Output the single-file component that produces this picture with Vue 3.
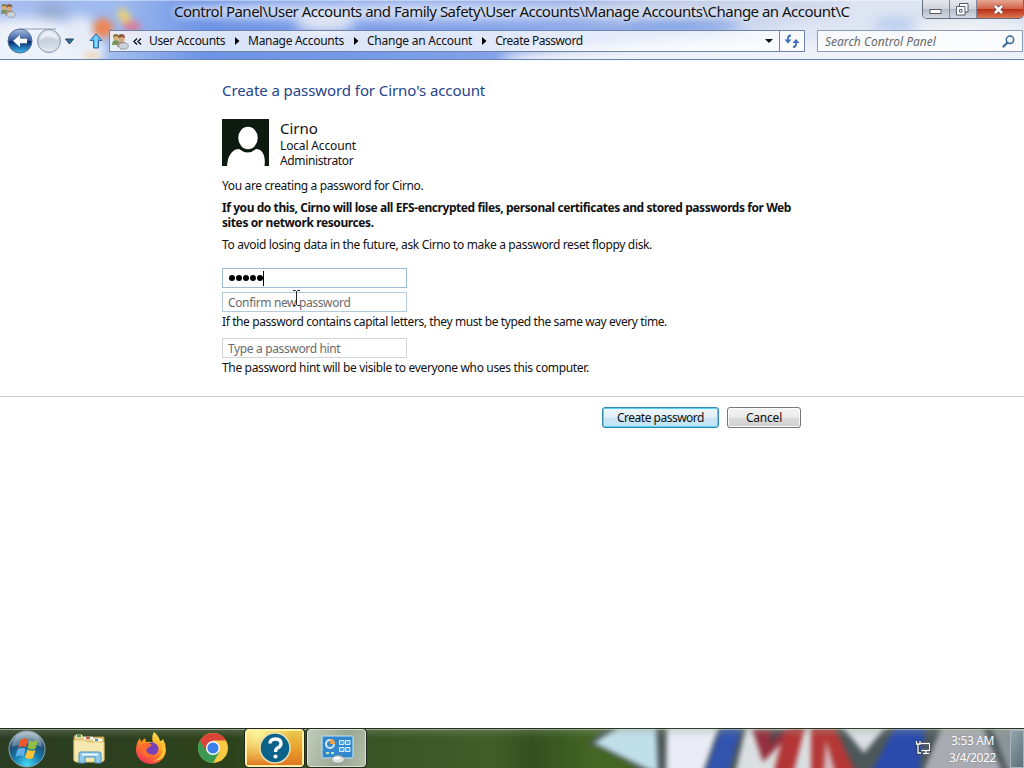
<script setup>
import { ref, reactive } from 'vue'

const title = 'Control Panel\\User Accounts and Family Safety\\User Accounts\\Manage Accounts\\Change an Account\\C'

const crumbs = [
    { label: 'User Accounts', name: 'users' },
    { label: 'Manage Accounts', name: 'manage' },
    { label: 'Change an Account', name: 'change' },
    { label: 'Create Password', name: 'create' },
]

const search = ref('')

const form = reactive({
    password: '12345',
    confirm: '',
    hint: '',
})
</script>

<template>
    <div class="desktop">
        <header class="glass">
            <svg class="backdrop" width="1024" height="59" viewBox="0 0 1024 59">
                <defs>
                    <linearGradient id="sky" x1="0" x2="1" y1="0" y2="0">
                        <stop offset="0" stop-color="#a6beee" />
                        <stop offset=".12" stop-color="#9db9ee" />
                        <stop offset=".2" stop-color="#6c93e6" />
                        <stop offset=".45" stop-color="#7f9fe8" />
                        <stop offset=".6" stop-color="#93aeea" />
                        <stop offset=".7" stop-color="#c3d0ee" />
                        <stop offset=".78" stop-color="#dfe6f4" />
                        <stop offset="1" stop-color="#dce3f0" />
                    </linearGradient>
                    <filter id="soft" filterUnits="userSpaceOnUse" x="-60" y="-60" width="1150" height="180" color-interpolation-filters="sRGB"><feGaussianBlur stdDeviation="6" /></filter>
                    <filter id="softer" filterUnits="userSpaceOnUse" x="-60" y="-60" width="1150" height="180" color-interpolation-filters="sRGB"><feGaussianBlur stdDeviation="3.500" /></filter>
                </defs>
                <rect width="1024" height="59" fill="url(#sky)" />
                <g filter="url(#soft)">
                    <ellipse cx="25" cy="52" rx="80" ry="34" fill="#eef2fa" />
                    <ellipse cx="52" cy="12" rx="15" ry="8" fill="#93a9d0" />
                    <ellipse cx="80" cy="34" rx="18" ry="18" fill="#e6ecf7" />
                    <ellipse cx="400" cy="11" rx="225" ry="10" fill="#c5d3f3" />
                    <ellipse cx="325" cy="24" rx="30" ry="8" fill="#e4e8f1" />
                    <ellipse cx="700" cy="10" rx="150" ry="12" fill="#c9d3ea" />
                    <ellipse cx="800" cy="60" rx="300" ry="18" fill="#eff2f8" />
                    <rect x="560" y="48" width="520" height="30" fill="#eff2f8" />
                    <ellipse cx="680" cy="26" rx="60" ry="5" fill="#6f97e4" />
                    <ellipse cx="895" cy="24" rx="22" ry="6" fill="#b3c9ef" />
                    <ellipse cx="970" cy="32" rx="60" ry="12" fill="#eef1f6" />
                </g>
                <g filter="url(#softer)">
                    <ellipse cx="103" cy="28" rx="10" ry="10" fill="#ee8656" />
                    <path d="M116 12l8-4 14 20-10 4z" fill="#f0d169" />
                    <ellipse cx="132" cy="27" rx="9" ry="6" fill="#d77b9b" />
                    <ellipse cx="92" cy="56" rx="8" ry="3" fill="#eecb9d" />
                </g>
                <rect width="1024" height="1" fill="#fff" opacity=".4" />
            </svg>

            <div class="titlebar">
                <svg class="app-icon" width="16" height="18" viewBox="0 0 18 18">
                    <use href="#people" />
                </svg>
                <span class="title">{{ title }}</span>
                <div class="controls">
                    <button class="control">
                        <svg class="minimize" width="14" height="6" viewBox="0 0 14 6"><rect x="1" y=".5" width="11" height="4" fill="#fff" stroke="#555b68" /></svg>
                    </button>
                    <button class="control">
                        <svg width="13" height="13" viewBox="0 0 13 13" fill="#fff" stroke="#555b68">
                            <path d="M3.500.5h8.500v8.500h-8.500z" />
                            <path d="M.5 3.500h8.500v8.500h-8.500z" />
                            <path d="M3.500 6.500h2.500v2.500h-2.500z" />
                        </svg>
                    </button>
                    <button class="control close">
                        <svg width="13" height="11" viewBox="0 0 13 11">
                            <path d="M3 2l7 7M10 2l-7 7" stroke="#6d4046" stroke-width="4.400" />
                            <path d="M3 2l7 7M10 2l-7 7" stroke="#fff" stroke-width="2.600" />
                        </svg>
                    </button>
                </div>
            </div>

            <nav class="navbar">
                <svg class="travel" width="78" height="28" viewBox="0 0 78 28">
                    <defs>
                        <linearGradient id="back" x1="0" x2="0" y1="0" y2="1">
                            <stop offset="0" stop-color="#a9bde0" />
                            <stop offset=".48" stop-color="#31599f" />
                            <stop offset=".52" stop-color="#08296f" />
                            <stop offset="1" stop-color="#3dbdf0" />
                        </linearGradient>
                        <linearGradient id="forward" x1="0" x2="0" y1="0" y2="1">
                            <stop offset="0" stop-color="#e6ebf2" />
                            <stop offset=".5" stop-color="#c5cfdd" />
                            <stop offset="1" stop-color="#e4eaf2" />
                        </linearGradient>
                        <g id="people">
                            <path d="M1 12q0-5 4-5 4 0 4 5z" fill="#74965a" />
                            <circle cx="5" cy="4.500" r="3" fill="#d3b06f" />
                            <path d="M2 4q0-3 3-3t3 3l-2-1z" fill="#7d7448" />
                            <path d="M6 14q0-6 4.500-6 5 0 5 6z" fill="#b08a72" />
                            <circle cx="10.500" cy="5.500" r="3.200" fill="#d9a77d" />
                            <path d="M7 5q0-4 3.500-4t3.600 4l-3-1z" fill="#8c5a45" />
                            <ellipse cx="12.500" cy="13" rx="4.800" ry="3.200" fill="#cbd3da" stroke="#7d8790" stroke-width=".7" />
                        </g>
                    </defs>
                    <path d="M12 2h37" stroke="#8a9bb9" />
                    <circle cx="13" cy="14" r="12" fill="url(#back)" stroke="#5b6d91" />
                    <path d="M6 14l7-6v3.800h7v4.400h-7v3.800z" fill="#fff" />
                    <circle cx="42" cy="14" r="11.500" fill="url(#forward)" stroke="#8494ae" />
                    <path d="M33 13q8-7 18 0-1-8-9-8t-9 8" fill="#eff2f7" opacity=".8" />
                    <path d="M58.500 12h8l-4 5z" fill="#2c75a3" stroke="#29415f" />
                </svg>
                <svg class="up" width="14" height="16" viewBox="0 0 14 16">
                    <path d="M7 1l6 6.500h-3.500V15h-5V7.500H1z" fill="#53bdf3" stroke="#3568ad" />
                    <path d="M7 3v11" stroke="#9fe0ff" stroke-width="1.500" />
                </svg>

                <div class="address">
                    <svg class="people" width="18" height="17" viewBox="0 0 18 17"><use href="#people" /></svg>
                    <svg class="chevrons" width="9" height="7" viewBox="0 0 9 7" fill="none" stroke="#111" stroke-width="1.400">
                        <path d="M4 .5l-3 3 3 3M8 .5l-3 3 3 3" />
                    </svg>
                    <ul class="crumbs">
                        <li v-for="(crumb, i) in crumbs" :key="crumb.name" :class="crumb.name">
                            <svg v-if="i" width="5" height="8" viewBox="0 0 5 8"><path d="M0 0l4.500 4L0 8z" /></svg>
                            <span>{{ crumb.label }}</span>
                        </li>
                    </ul>
                    <svg class="drop" width="8" height="4" viewBox="0 0 8 4"><path d="M0 0h8l-4 4z" fill="#111" /></svg>
                    <button class="refresh">
                        <svg width="16" height="14" viewBox="0 0 16 14" fill="none" stroke="#426db5" stroke-width="1.800">
                            <path d="M7 1.500q-3 0-3 3V7" />
                            <path d="M.5 5.500h7L4 9.500z" fill="#426db5" stroke="none" />
                            <path d="M9 13q3 0 3-3V7.500" />
                            <path d="M8.500 9h7L12 5z" fill="#426db5" stroke="none" />
                        </svg>
                    </button>
                </div>

                <div class="search">
                    <input v-model="search" placeholder="Search Control Panel">
                    <svg width="13" height="13" viewBox="0 0 13 13" fill="none">
                        <path d="M6 7L1.500 11.500" stroke="#41719b" stroke-width="2.400" stroke-linecap="round" />
                        <circle cx="8" cy="4.800" r="3.700" fill="#eaf6fc" stroke="#39658f" stroke-width="1.500" />
                    </svg>
                </div>
            </nav>
        </header>

        <main>
            <section class="page">
                <h1>Create a password for Cirno's account</h1>
                <div class="account">
                    <svg width="47" height="47" viewBox="0 0 47 47">
                        <rect width="47" height="47" fill="#0c1a10" />
                        <path d="M5 47C6 34 12 30 17 30q9 7 17 0c6 0 10 6 8.500 17z" fill="#fff" />
                        <ellipse cx="26" cy="19" rx="10.500" ry="12" fill="#fff" stroke="#0c1a10" stroke-width="1.500" />
                    </svg>
                    <div class="who">
                        <strong>Cirno</strong>
                        <span class="kind">Local Account</span>
                        <span class="role">Administrator</span>
                    </div>
                </div>
                <p class="intro">You are creating a password for Cirno.</p>
                <p class="warning">If you do this, Cirno will lose all EFS-encrypted files, personal certificates and stored passwords for Web<br><span>sites or network resources.</span></p>
                <p class="advice">To avoid losing data in the future, ask Cirno to make a password reset floppy disk.</p>

                <div class="field focus">
                    <span class="dots"><i v-for="n in form.password.length" :key="n"></i></span>
                    <span class="caret"></span>
                </div>
                <div class="field second">
                    <input v-model="form.confirm" placeholder="Confirm new password">
                    <svg class="ibeam" width="9" height="16" viewBox="0 0 9 16" fill="none" stroke="#222">
                        <path d="M1 .5h2.500l1 1 1-1H8M4.500 1.500v13M1 15.500h2.500l1-1 1 1H8" />
                    </svg>
                </div>
                <p class="note caps">If the password contains capital letters, they must be typed the same way every time.</p>
                <div class="field hint">
                    <input v-model="form.hint" placeholder="Type a password hint">
                </div>
                <p class="note visible">The password hint will be visible to everyone who uses this computer.</p>
            </section>
            <div class="actions">
                <button class="button primary">Create password</button>
                <button class="button cancel">Cancel</button>
            </div>
        </main>

        <footer class="taskbar">
            <svg class="backdrop" width="1024" height="40" viewBox="0 0 1024 40">
                <defs>
                    <linearGradient id="grass" x1="0" x2="1" y1="0" y2="0">
                        <stop offset="0" stop-color="#2b3d22" />
                        <stop offset=".22" stop-color="#2c421b" />
                        <stop offset=".38" stop-color="#3b5626" />
                        <stop offset=".48" stop-color="#425d29" />
                        <stop offset=".52" stop-color="#34501f" />
                        <stop offset=".58" stop-color="#446624" />
                        <stop offset="1" stop-color="#456023" />
                    </linearGradient>
                    <linearGradient id="sheen" x1="0" x2="0" y1="0" y2="1">
                        <stop offset="0" stop-color="#9aa796" stop-opacity=".35" />
                        <stop offset=".25" stop-color="#9aa796" stop-opacity="0" />
                    </linearGradient>
                    <filter id="paint" filterUnits="userSpaceOnUse" x="560" y="-20" width="500" height="80" color-interpolation-filters="sRGB"><feGaussianBlur stdDeviation="2.500" /></filter>
                </defs>
                <rect width="1024" height="40" fill="url(#grass)" />
                <g filter="url(#paint)">
                    <path d="M588 15L612-5h424v60H650l-20-20z" fill="#4d5759" />
                    <path d="M594 15l26-17h36l2 48-17-8z" fill="#bfdfe9" />
                    <path d="M667-5h53l-19 55h-35z" fill="#e9ecf5" />
                    <path d="M723-5h20l-16 55h-24z" fill="#3253ae" />
                    <path d="M747-5h83l-10 55h-86z" fill="#dadfe1" />
                    <path d="M752 0h44l-33 34z" fill="#94303f" />
                    <path d="M770 0h17l-17 17z" fill="#5c4047" />
                    <path d="M789-5h17l-14 55h-19q5-30 16-55z" fill="#b43536" />
                    <path d="M811-5h22l25 55h-47z" fill="#b43736" />
                    <path d="M826 12l11 38h-14z" fill="#d4bec1" />
                    <path d="M839-5h50l-25 30z" fill="#dce0e4" />
                    <path d="M897-5h29l-8 55h-50z" fill="#2b4bac" />
                    <path d="M943-5h38l24 55h-84z" fill="#a9abb2" />
                    <path d="M990-5h38v55h-17z" fill="#8b9498" />
                </g>
                <rect width="1024" height="40" fill="url(#sheen)" />
                <rect width="1024" height="1" fill="#182216" opacity=".85" />
                <rect y="1" width="1024" height="1" fill="#dce5d6" opacity=".5" />
            </svg>

            <div class="tasks">
                <button class="start">
                    <svg width="40" height="38" viewBox="0 0 40 38">
                        <defs>
                            <radialGradient id="orb" cx=".5" cy=".95" r=".9">
                                <stop offset="0" stop-color="#49dcf4" />
                                <stop offset=".45" stop-color="#1678aa" />
                                <stop offset=".75" stop-color="#204d70" />
                                <stop offset="1" stop-color="#a9bcc8" />
                            </radialGradient>
                        </defs>
                        <circle cx="20" cy="19" r="18" fill="url(#orb)" stroke="#8fa3ad" />
                        <path d="M5 17Q7 3 20 3t15 14q-15-7-30 0z" fill="#c8d8df" opacity=".4" />
                        <path d="M13.500 10q3.500-3 7.500-.5l-2 8q-4-2-8 .5z" fill="#ed592d" />
                        <path d="M22.500 10.500q4 2 8.500-.5l-2.500 8.500q-4 2-8-.5z" fill="#91bf46" />
                        <path d="M10.500 19.500q4-2.500 8-.5l-2 7.500q-4-2-8 .5z" fill="#65afe7" />
                        <path d="M20.500 19.500q4 2 8 .5l-2.500 8q-4 2-8-.5z" fill="#fac238" />
                    </svg>
                </button>
                <button class="task">
                    <svg width="34" height="34" viewBox="0 0 34 34">
                        <path d="M2 6q0-2 2-2h6l2 2h20v24H2z" fill="#e3cc83" stroke="#a98e46" />
                        <path d="M4 5h6M12 7h9M21 9h9" stroke="#fff" stroke-width="2.500" />
                        <path d="M5 5h4" stroke="#35a344" stroke-width="2" />
                        <path d="M14 7h4" stroke="#c95a4b" stroke-width="2" />
                        <path d="M23 9h3" stroke="#438fc8" stroke-width="2" />
                        <path d="M2 9h10l3 2h17v18l-2 2H4l-2-2z" fill="#f6e9af" stroke="#dcc579" />
                        <path d="M7 32V23q0-2 2-2h18q2 0 2 2v9h-6v-6H13v6z" fill="#8fc9ea" stroke="#4c91be" />
                        <path d="M10 23.500h16" stroke="#e7f7ff" stroke-width="2" />
                    </svg>
                </button>
                <button class="task">
                    <svg width="34" height="34" viewBox="0 0 34 34">
                        <defs>
                            <linearGradient id="fox" x1=".8" x2=".2" y1="0" y2="1">
                                <stop offset="0" stop-color="#fff04c" />
                                <stop offset=".45" stop-color="#ff951e" />
                                <stop offset="1" stop-color="#f12a58" />
                            </linearGradient>
                        </defs>
                        <path d="M20 1q5 4 6 9 2 0 3-2 3 5 3 11c0 8-7 14-15 14S2 27 2 19q0-7 4-12l1 4 4-4 1 4q5-1 7 1-2-6 1-11z" fill="url(#fox)" />
                        <circle cx="18" cy="18" r="6.500" fill="#7640bd" />
                        <path d="M8 13q6-2 10 1l-4 3q-3 1-1 4 3 4 9 2-4 6-11 2-5-4-3-12z" fill="#ff6d2c" />
                        <path d="M25 10q6 6 3 13-3 6-10 7 12 0 13-11z" fill="#ffd83f" />
                    </svg>
                </button>
                <button class="task">
                    <svg width="32" height="32" viewBox="0 0 32 32">
                        <circle cx="16" cy="16" r="15" fill="#f9c941" />
                        <path d="M16 16L3 8.500A15 15 0 0 0 16 31l6.500-11.500z" fill="#3b9a51" />
                        <path d="M3 8.500A15 15 0 0 1 29 8.500H16L9.500 19.500z" fill="#db4539" />
                        <circle cx="16" cy="16" r="7" fill="#fff" />
                        <circle cx="16" cy="16" r="5.600" fill="#3d7fe8" />
                    </svg>
                </button>
                <button class="task open help">
                    <svg width="34" height="34" viewBox="0 0 34 34">
                        <circle cx="17" cy="17" r="15" fill="#0c6289" stroke="#e5dfb3" stroke-width="1.500" />
                        <path d="M12 12.500q0-4.500 5.500-4.500 5.500 0 5.500 4.500 0 3-3.500 4.500-2 1-2 4" fill="none" stroke="#fff" stroke-width="3.300" />
                        <circle cx="17.500" cy="25.500" r="2.100" fill="#fff" />
                    </svg>
                </button>
                <button class="task open current">
                    <svg width="34" height="32" viewBox="0 0 34 32">
                        <rect x="2" y="4" width="31" height="22" rx="1" fill="#3388cd" stroke="#c8e6f6" />
                        <circle cx="10" cy="12" r="4" fill="none" stroke="#d4eafa" stroke-width="2" />
                        <path d="M10 12V7q5 0 5 5z" fill="#f0a347" />
                        <path d="M6 21h3M11 21h3" stroke="#bdeaa6" stroke-width="2" />
                        <path d="M19.500 8.500h4.500v4h-4.500zM25.500 8.500h4.500v4h-4.500zM19.500 15.500h4.500v4h-4.500zM25.500 15.500h4.500v4h-4.500z" fill="#4fa5e3" stroke="#d8eefc" />
                        <ellipse cx="18" cy="27.500" rx="6.500" ry="3.800" fill="#dce1df" stroke="#929b9a" />
                        <ellipse cx="17" cy="26" rx="3" ry="1.500" fill="#fff" />
                    </svg>
                </button>
            </div>

            <div class="tray">
                <svg width="16" height="15" viewBox="0 0 16 15" fill="none" stroke-width="1.300">
                    <g stroke="#2c3440" stroke-width="3">
                        <path d="M5.500 3.500h9v7h-8M8 13.500h6M11 10.500v3" />
                        <path d="M1.500 1v3h3.500V1M3 4v9h3" />
                    </g>
                    <g stroke="#fff">
                        <path d="M5.500 3.500h9v7h-8M8 13.500h6M11 10.500v3" />
                        <path d="M1.500 1v3h3.500V1M3 4v9h3" />
                    </g>
                </svg>
                <div class="clock">
                    <span class="time">3:53 AM</span>
                    <span class="date">3/4/2022</span>
                </div>
                <div class="peek"></div>
            </div>
        </footer>
    </div>
</template>

<style>
body {
    overflow: hidden;
}
</style>

<style scoped>
* {
    box-sizing: border-box;
}

.desktop {
    display: flex;
    flex-direction: column;
    width: 1024px;
    height: 768px;
    background: #fff;
    color: #111;
    font: 12px/15px "Noto Sans", "Open Sans", sans-serif;
    letter-spacing: -0.36px;
    white-space: nowrap;
}

svg {
    display: block;
    flex: none;
}

p, h1, ul {
    margin: 0;
    padding: 0;
    font-size: inherit;
}

button, input {
    border: 0;
    padding: 0;
    background: none;
    font: inherit;
    letter-spacing: inherit;
    color: inherit;
}

.glass, .taskbar {
    position: relative;
    isolation: isolate;
    flex: none;
}

.backdrop {
    position: absolute;
    inset: 0;
    z-index: -1;
}

.glass {
    height: 60px;
    border-bottom: 1px solid #6682b2;
}

.titlebar {
    display: flex;
    height: 27px;
}

.app-icon {
    margin-top: 2px;
}

.title {
    flex: 1;
    padding-left: 158px;
    font-size: 15px;
    line-height: 22px;
    letter-spacing: -0.51px;
    text-shadow: 0 0 6px #fff;
}

.controls {
    display: flex;
    height: 19px;
    width: 102px;
    border: 1px solid #636d80;
    border-top: 0;
    border-radius: 0 0 5px 5px;
    overflow: hidden;
}

.control {
    display: flex;
    justify-content: center;
    align-items: center;
    width: 27px;
    border-right: 1px solid #7d8799;
    background: linear-gradient(#e6e8ed, #d0d4dc 48%, #b5bcc9 52%, #d4dae4);
}

.control.close {
    flex: 1;
    border: 0;
    background: linear-gradient(#e6a591, #d3654d 48%, #b92f17 52%, #dc7751);
}

.control svg {
    margin-left: -2px;
}

.control .minimize {
    margin: 5px 0 0;
}

.control.close svg {
    margin-left: -3px;
}

.navbar {
    display: flex;
    height: 32px;
}

.travel {
    margin-left: 7px;
}

.up {
    margin: 6px 6px 0 4px;
}

.address, .search {
    display: flex;
    align-items: center;
    height: 22px;
    margin-top: 3px;
    border: 1px solid #6f83a8;
    background: rgba(255, 255, 255, 0.75);
}

.address {
    width: 696px;
    padding-left: 1px;
}

.chevrons {
    margin-left: 4px;
}

.crumbs {
    display: flex;
    flex: 1;
    margin: -1px 0 0 7px;
    list-style: none;
}

.crumbs li {
    display: flex;
    align-items: center;
}

.crumbs svg {
    margin: 1px 8px 0 10px;
}

.manage {
    letter-spacing: -0.3px;
}

.change {
    letter-spacing: -0.24px;
}

.create {
    letter-spacing: -0.46px;
}

.drop {
    margin-right: 6px;
}

.refresh {
    display: flex;
    align-items: center;
    justify-content: center;
    width: 25px;
    height: 20px;
    border-left: 1px solid #6f83a8;
}

.search {
    width: 206px;
    margin-left: 12px;
    padding: 0 7px;
    border-color: #8c9db9;
}

input::placeholder {
    color: #6a6a6a;
    opacity: 1;
}

.search input {
    flex: 1;
    min-width: 0;
    font-style: italic;
    letter-spacing: 0;
}

main {
    flex: 1;
}

.page {
    height: 337px;
    padding: 20px 0 0 222px;
    border-bottom: 1px solid #ccc;
}

h1 {
    font-size: 15px;
    font-weight: 400;
    line-height: 20px;
    letter-spacing: -0.08px;
    color: #24458c;
}

.account {
    display: flex;
    gap: 11px;
    margin-top: 19px;
}

.who {
    display: flex;
    flex-direction: column;
    align-items: flex-start;
    margin-top: -1px;
}

.who strong {
    font-size: 15px;
    font-weight: 400;
    line-height: 20px;
    letter-spacing: 0;
}

.kind {
    letter-spacing: -0.15px;
}

.intro {
    margin-top: 10px;
}

.warning {
    margin-top: 7px;
    font-weight: 700;
    letter-spacing: -0.43px;
}

.warning span {
    letter-spacing: -0.4px;
}

.advice {
    margin-top: 7px;
    letter-spacing: -0.35px;
}

.field {
    position: relative;
    display: flex;
    align-items: center;
    width: 185px;
    height: 20px;
    padding-left: 5px;
    border: 1px solid #c6d3d8;
    border-top-color: #a5b0b7;
}

.field input {
    width: 100%;
    height: 18px;
    outline: 0;
}

.focus {
    margin-top: 16px;
    padding-left: 6px;
    border-color: #9abdd5;
}

.dots {
    display: flex;
    gap: 1px;
}

.dots i {
    width: 6px;
    height: 6px;
    border-radius: 50%;
    background: #000;
}

.caret {
    width: 1px;
    height: 15px;
    background: #000;
}

.second {
    margin-top: 4px;
    border-color: #b4cbda;
}

.ibeam {
    position: absolute;
    left: 69px;
    top: -3px;
}

.note {
    margin-top: 2px;
}

.caps {
    letter-spacing: -0.395px;
}

.visible {
    letter-spacing: -0.34px;
}

.hint {
    margin-top: 9px;
    border-color: #d2d6d8;
}

.actions {
    display: flex;
    gap: 8px;
    padding: 10px 0 0 602px;
}

.button {
    height: 21px;
    border: 1px solid #777;
    border-radius: 3px;
    background: linear-gradient(#f3f3f3, #ebebeb 48%, #dcdcdc 52%, #cfcfcf);
    box-shadow: inset 0 0 0 1px #fafafa;
}

.primary {
    width: 117px;
    border-color: #318bb0;
    background: linear-gradient(#eef6fa, #e1f0f8 48%, #cce4f1 52%, #bfe6f8);
    box-shadow: inset 0 0 0 1px #58d0f3;
    letter-spacing: -0.5px;
}

.cancel {
    width: 74px;
    letter-spacing: -0.2px;
}

.taskbar {
    display: flex;
    justify-content: space-between;
    height: 40px;
}

.tasks {
    display: flex;
}

.start {
    width: 54px;
    padding: 1px 0 0 7px;
}

.task {
    display: flex;
    align-items: center;
    justify-content: center;
    width: 60px;
    height: 40px;
    margin-left: 2px;
}

.task:nth-child(2) {
    margin-left: 5px;
}

.open {
    width: 59px;
    height: 38px;
    margin-top: 1px;
    border: 1px solid #fdf3b4;
    border-radius: 3px;
    outline: 1px solid #20291b;
}

.open svg {
    margin-top: -1px;
}

.help {
    background: radial-gradient(circle at 20% 0, #fff7a2, transparent 60%), linear-gradient(#ecc94f, #e9a12e 50%, #df7622);
    box-shadow: inset 0 0 0 1px #ffee9c;
}

.current {
    margin-left: 3px;
    border-color: #dce3d4;
    background: linear-gradient(110deg, #c1cdbb, #98a590 60%, #b4bfaa);
}

.tray {
    display: flex;
    align-items: center;
    color: #fff;
}

.tray svg {
    margin-top: -1px;
}

.clock {
    display: flex;
    flex-direction: column;
    align-items: center;
    width: 73px;
    margin: 2px 0 0 6px;
    padding-right: 2px;
    line-height: 17px;
    text-shadow: 0 0 2px rgba(60, 70, 80, 0.4);
}

.date {
    letter-spacing: -0.4px;
}

.peek {
    width: 14px;
    height: 38px;
    margin-top: 2px;
    border: 1px solid #a4b5bd;
    background: linear-gradient(120deg, #93a5ad, #5e6e78);
}
</style>
